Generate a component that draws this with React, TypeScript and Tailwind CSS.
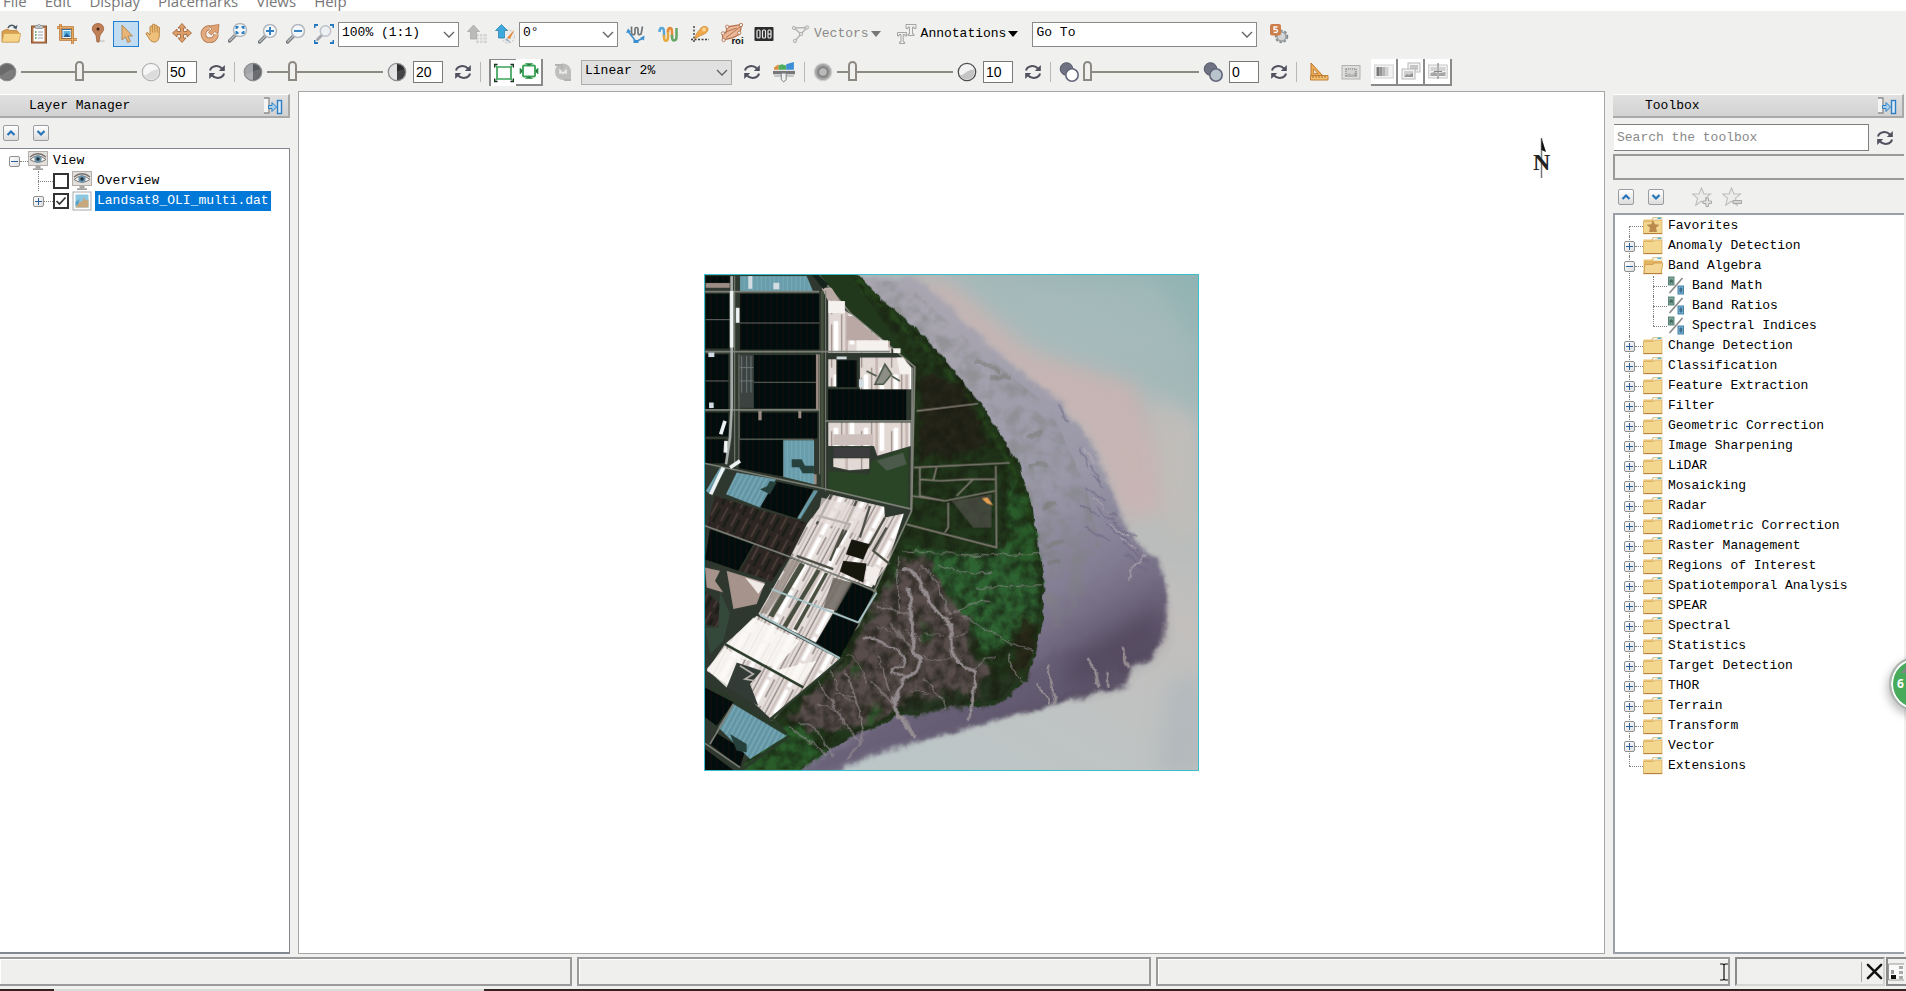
import React from "react";

type Kids = { children?: React.ReactNode };

const MONO = "font-['Liberation_Mono',monospace] text-[13px] leading-5";

/* ---------- icon helpers ---------- */

function Svg({ children, size = 20 }: Kids & { size?: number }) {
  return (
    <svg width={size} height={size} viewBox="0 0 20 20" fill="none" aria-hidden="true" className="block shrink-0">
      {children}
    </svg>
  );
}

const OpenFolder = () => (
  <Svg>
    <path d="M1 18V7.500L6 5l3 1.500h7L18 9v9z" fill="#d9a04e" stroke="#b9823a" strokeWidth=".8" />
    <path d="M1 18 3 9.500h17L17.500 18z" fill="#f6d489" stroke="#d0a050" strokeWidth=".7" />
    <path d="M7 4c2-4 6-3.500 7.500-.5" stroke="#4c5a68" strokeWidth="1.500" />
    <path d="m16.500 1-1 4.500-3.700-2z" fill="#4c5a68" />
  </Svg>
);
const Clipboard = () => (
  <Svg>
    <rect x="2.500" y="2" width="15" height="17" fill="#b5764a" stroke="#8b5632" />
    <rect x="4.500" y="4" width="11" height="13.500" fill="#fbfbfb" />
    <rect x="6" y="1.500" width="8" height="3" rx="1" fill="#c6ccd0" stroke="#7c858b" strokeWidth=".7" />
    <circle cx="10" cy="1.500" r="1.300" fill="#e8eaec" stroke="#7c858b" strokeWidth=".7" />
    <path d="M6 8h1.500M6 11h1.500M6 14h1.500" stroke="#3d9a4e" strokeWidth="1.500" />
    <path d="M9 8h5M9 11h5M9 14h5" stroke="#9aa4ab" />
  </Svg>
);
const Crop = () => (
  <Svg>
    <rect x="5" y="5.500" width="10" height="9" fill="#f5f5f5" stroke="#2c6ea5" />
    <rect x="6.500" y="7" width="7" height="6" fill="#5bb3e0" />
    <path d="m6.500 13 3-4 4 4z" fill="#225f96" />
    <path d="M3.500 0v15.500H20M0 3.500h15.500V20" stroke="#b86f2c" strokeWidth="2.600" />
    <path d="M3.500 0v15.500H20M0 3.500h15.500V20" stroke="#e4a85f" strokeWidth="1.200" />
  </Svg>
);
const Pin = () => (
  <Svg>
    <ellipse cx="12.500" cy="18" rx="4.500" ry="1.300" fill="#d2d2d0" />
    <path d="M10 .5C6.500.5 4.300 2.800 4.300 5.700c0 2.800 2.500 4.300 3.700 6.800L9 19h2l1-6.500c1.200-2.500 3.700-4 3.700-6.800C15.700 2.800 13.500.5 10 .5z" fill="#c07f55" stroke="#9a6240" strokeWidth=".8" />
    <circle cx="10" cy="6" r="1.500" fill="#3d2418" />
  </Svg>
);
const Pointer = () => (
  <Svg>
    <path d="M6 1v15l3.500-3 2.300 5.500 2.600-1.200L12 12h4.500z" fill="#e8b577" stroke="#b08a5c" strokeWidth="1" strokeLinejoin="round" />
  </Svg>
);
const Hand = () => (
  <Svg>
    <path d="M6 12V4.200a1.200 1.200 0 0 1 2.400 0V2.300a1.200 1.200 0 0 1 2.400 0v1a1.200 1.200 0 0 1 2.400 0v1.500a1.100 1.100 0 0 1 2.200.2L15.200 13c-.2 3.500-1.800 6-4.700 6-3.500 0-4.500-2-6-4.500L2.200 11c-.5-1.200 1-1.900 1.800-1z" fill="#efc07a" stroke="#b98240" strokeWidth="1" />
    <path d="M8.400 4v5.500M10.800 3.500v6M13.200 4.500v5" stroke="#b98240" strokeWidth=".9" />
  </Svg>
);
const Move = () => (
  <Svg>
    <path d="m10 .5 4 4.500h-2.500v3.500H15V6l4.500 4-4.500 4v-2.500h-3.500V15H14l-4 4.500L6 15h2.500v-3.500H5V14L.5 10 5 6v2.500h3.500V5H6z" fill="#dc9f6a" stroke="#a86a3c" strokeWidth=".9" />
  </Svg>
);
const Rotate = () => (
  <Svg>
    <path d="M9.500 4.800A6.300 6.300 0 1 0 16 11.500" stroke="#b0754c" strokeWidth="5.600" />
    <path d="M9.500 4.800A6.300 6.300 0 1 0 16 11.500" stroke="#e2ab80" strokeWidth="4" />
    <path d="M8.500 9.500 12 6 9 3l10-1.500-1 9.500-3.200-2.500-3.500 3.500z" fill="#dfa273" stroke="#b06f42" strokeWidth=".7" />
  </Svg>
);
function Lens({ mark }: { mark: string }) {
  return (
    <Svg>
      <path d="m1.500 18 6-6" stroke="#6f7478" strokeWidth="3.400" strokeLinecap="round" />
      <path d="m1.800 17.500 6-6" stroke="#b9bdc0" strokeWidth="1.600" strokeLinecap="round" />
      <circle cx="12" cy="7" r="6.500" fill="#f4f7fa" stroke="#b4b9bf" strokeWidth="1.500" />
      <path d={mark} stroke="#2f7fc0" strokeWidth="1.900" />
    </Svg>
  );
}
const FitLens = () => (
  <Svg>
    <path d="M.5 4V1H4M16 1h3.500v3M.5 16v3H4M16 19h3.500v-3" stroke="#2579bf" strokeWidth="2" />
    <path d="m3.500 15.500 4-4" stroke="#a4a8ab" strokeWidth="3" strokeLinecap="round" />
    <circle cx="11.500" cy="7" r="5.200" fill="#eef1f4" stroke="#bcc2c8" strokeWidth="1.500" />
  </Svg>
);
const ArrowBlocks = () => (
  <Svg>
    <path d="M9 10h11v9H9z" fill="#d6d6d4" />
    <path d="M9 13h11M9 16h11M12.500 10v9M16 10v9" stroke="#efefed" />
    <path d="m6.500 1 6 6.500H9.500V15h-6V7.500H.5z" fill="#bababa" stroke="#a4a4a4" strokeWidth=".7" />
  </Svg>
);
const ArrowCompass = () => (
  <Svg>
    <circle cx="13" cy="12.500" r="6.500" fill="#ececea" stroke="#b9c0c6" strokeDasharray="2 1.500" />
    <path d="m12 14 7.500-8.500L15 15z" fill="#e58a3c" />
    <path d="m12 14 4 5-6-3z" fill="#9db3c4" />
    <path d="m6.500.5 6 6H9.500V14h-6V6.500H.5z" fill="#3da9dc" stroke="#1f7dad" strokeWidth=".7" />
  </Svg>
);
const ProfileArrows = () => (
  <Svg>
    <path d="M5.500 2.500v6c0 3 3.500 3 3.500 0V5c0-2 3-2 3 0v4c0 2.500 3 2 3.300 0L16.500 2.500" stroke="#70767a" strokeWidth="1.700" />
    <path d="m2.500 8 7.500 9.500 6.500-3" stroke="#3b8fd0" strokeWidth="1.500" />
    <path d="m0 9 2-4.500 3 3.500zM18.500 11.500l-.5 5-4-2.500zM7.500 16h5v3h-5z" fill="#3b8fd0" />
  </Svg>
);
const Spectrum = () => (
  <Svg>
    <path d="M1.500 8c0-5.500 4.500-5.500 4.500 0v5" stroke="#5aa7d8" strokeWidth="2.500" />
    <path d="M6 11v2c0 5 4 5 4 0V5" stroke="#e7a93c" strokeWidth="2.500" />
    <path d="M10 8c0-5.500 4-5.500 4 0v5" stroke="#e28b3c" strokeWidth="2.500" />
    <path d="M14 11v2c0 5 4.500 4 4.500 0V4" stroke="#63a566" strokeWidth="2.500" />
  </Svg>
);
const Scatter = () => (
  <Svg>
    <path d="M4 2v16M1 15.500h18" stroke="#3e3e3e" strokeWidth="1.400" strokeDasharray="2 1.500" />
    <path d="M5 15c0-5 4-8 6-11 2-2.500 7-2 7 1s-3 5-6 6-4 2-7 4z" fill="#efa94a" stroke="#c98429" strokeWidth=".7" />
    <circle cx="14" cy="5.500" r="2" fill="#f8d693" />
  </Svg>
);
const Roi = () => (
  <Svg size={24}>
    <path d="m6 4 12-2-1.500 8L11 13l-8.500 2L2 10l3-1z" fill="#eab898" stroke="#b4704c" strokeWidth="1" />
    <path d="m3 9 11-4M5 13l12-9" stroke="#b4704c" strokeWidth=".8" />
    <g fill="#f3efec" stroke="#b4704c" strokeWidth=".7">
      <circle cx="6" cy="4" r="1.400" /><circle cx="17.500" cy="2.500" r="1.400" /><circle cx="2.500" cy="9.500" r="1.400" /><circle cx="3" cy="15" r="1.400" /><circle cx="16" cy="9" r="1.400" />
    </g>
    <text x="9.500" y="18.500" fontFamily="Liberation Sans" fontWeight="700" fontSize="8" fill="#111">roi</text>
  </Svg>
);
const Counter = () => (
  <Svg>
    <rect x=".5" y="3" width="19" height="14" rx="1" fill="#2c2c2c" />
    <g stroke="#e8e8e8" strokeWidth="1.200">
      <rect x="3" y="6" width="3" height="8" rx="1" /><rect x="8.500" y="6" width="3" height="8" rx="1" /><rect x="14" y="6" width="3" height="8" rx="1" /><path d="M14 10h3" />
    </g>
  </Svg>
);
const VectorIcon = () => (
  <Svg>
    <path d="m4 4 13-.5L11 10l-6 7M4 4l7 6" stroke="#b4b4b2" strokeWidth="1.500" />
    <g fill="#dededc" stroke="#a8a8a6" strokeWidth=".8">
      <circle cx="4" cy="4" r="1.700" /><circle cx="17" cy="3.500" r="1.700" /><circle cx="11" cy="10" r="1.700" /><circle cx="5" cy="17" r="1.700" />
    </g>
  </Svg>
);
const TextIcon = () => (
  <Svg>
    <path d="M9 .5h10v4h-2V3h-1.500v7H17v1.500h-6V10h1.500V3H11v1.500H9z" fill="#f2f2f0" stroke="#9c9c9a" strokeWidth=".9" />
    <path d="M.5 8.500h9v3.500H8v-1.500H6.200V18h1.500v1.500H2.500V18H4v-7.500H2V12H.5z" fill="#f2f2f0" stroke="#9c9c9a" strokeWidth=".9" />
  </Svg>
);
const Extensions5 = () => (
  <Svg>
    <circle cx="12.500" cy="12.500" r="5.500" fill="#d2d4d5" stroke="#878c90" strokeWidth="2.500" strokeDasharray="2.400 1.600" />
    <circle cx="12.500" cy="12.500" r="4.500" stroke="#9da2a5" strokeWidth="1.400" />
    <rect x="1" y="0" width="11" height="11.500" rx="2" fill="#cd7f4b" />
    <path d="M8.500 3H5v2.500c3-.6 3.700.5 3.500 1.700C8.300 8.600 6.500 8.800 4.700 8" stroke="#fff" strokeWidth="1.300" />
  </Svg>
);
const Refresh = () => (
  <Svg>
    <path d="M3 8.500c1-4.700 8-6 12-2" stroke="#50505f" strokeWidth="2" />
    <path d="M17.800 3v6h-6z" fill="#50505f" />
    <path d="M17 11.500c-1 4.700-8 6-12 2" stroke="#50505f" strokeWidth="2" />
    <path d="M2.200 17v-6h6z" fill="#50505f" />
  </Svg>
);
function Ball({ kind }: { kind: "dark" | "light" | "contrastLow" | "contrastHigh" | "blur" | "sharp" }) {
  if (kind === "blur")
    return (
      <Svg>
        <circle cx="10" cy="10" r="9.300" fill="#cfcfcd" />
        <circle cx="10" cy="10" r="8" fill="#a5a5a5" />
        <circle cx="10" cy="10" r="6" fill="#858585" />
        <circle cx="10" cy="10" r="3.800" fill="#b9b9b9" />
      </Svg>
    );
  const fills = {
    dark: ["#6a6a6a", "#7d7d7d", "#8d8d8d"],
    light: ["#f6f6f6", "#dcdcdc", "#b4b4b4"],
    contrastLow: ["#a3a5a8", "#55585c", "#8a8c8e"],
    contrastHigh: ["#e2e2e2", "#2b2b2d", "#8a8c8e"],
    sharp: ["#f2f2f2", "#c3c4c3", "#4a4d4c"],
  }[kind];
  const half = kind.startsWith("contrast");
  return (
    <Svg>
      <circle cx="10" cy="10" r="8.700" fill={fills[0]} stroke={fills[2]} strokeWidth="1.300" />
      {half ? (
        <path d="M10 2a8 8 0 0 1 0 16z" fill={fills[1]} />
      ) : (
        <path d="M2.500 13c5 1 7-6 15-5.500.8 6-3 10-7.500 10-4 0-6-2-7.500-4.500z" fill={fills[1]} />
      )}
      {half && <path d="M2.500 12c5 1 8-5 15-4.500 0 6-3 10-7.500 10-4 0-6-2-7.500-5.500z" fill="#fff" opacity=".13" />}
    </Svg>
  );
}
function Overlap({ front }: { front: string }) {
  return (
    <Svg>
      <circle cx="7.500" cy="7" r="6.300" fill="#6e7282" stroke="#565a6a" />
      <circle cx="13" cy="13" r="6.200" fill={front} stroke="#62667a" strokeWidth="1.600" />
    </Svg>
  );
}
const Extent = () => (
  <Svg>
    <rect x="3" y="4" width="14" height="12" rx="1" stroke="#3ba458" strokeWidth="1.700" />
    <path d="M.5 4.500v-3h3M16.500 1.500h3v3M.5 15.500v3h3M16.500 18.500h3v-3" stroke="#222" strokeWidth="1.600" />
    <path d="m1 2 3 3M19 2l-3 3M1 18l3-3M19 18l-3-3" stroke="#3ba458" strokeWidth="1.200" />
  </Svg>
);
const ExtentIn = () => (
  <Svg>
    <rect x="4" y="4.500" width="12" height="11" rx="1" stroke="#3ba458" strokeWidth="1.900" />
    <path d="M6.500 2.500h7L10 5zM6.500 17.500h7L10 15zM1 7v6l3-3zM19 7v6l-3-3z" fill="#2d6e3e" stroke="#3ba458" strokeWidth=".8" />
  </Svg>
);
const DisabledRefresh = () => (
  <Svg>
    <path d="M2 10a8 8 0 0 1 16-1v9h-9a8 8 0 0 1-7-8z" fill="#bebebc" />
    <path d="M2 3h7v4M18 18h-7" stroke="#b2b2b0" strokeWidth="2" />
    <path d="M7 12V8.500l3 3 3-3V12" stroke="#e9e9e7" strokeWidth="1.600" />
  </Svg>
);
const HistogramIcon = () => (
  <Svg size={22}>
    <path d="M1 8V6l4-3v5z" fill="#e28a3c" />
    <path d="M5 8V4l3-1 4 1v4z" fill="#4fae5e" />
    <path d="M12 8V3l3-1 4-1v7z" fill="#3c8fd6" />
    <path d="M0 9h20v3H0z" fill="#75777a" />
    <path d="M1 12.500h18v2H1z" fill="#c3c4c5" />
    <path d="M7.500 11h4.500v6l-2.200 2-2.300-2z" fill="#f0f0f0" stroke="#7e8082" strokeWidth=".9" />
  </Svg>
);
const SetSquare = () => (
  <Svg>
    <path d="M2 1v12.500L14 14z" fill="#f2ac55" stroke="#b9762d" />
    <path d="M4.500 7v4.500H9z" fill="#f0f0ee" stroke="#b9762d" strokeWidth=".8" />
    <path d="M1.500 13.500h17.500V18H1.500z" fill="#f6c071" stroke="#b9762d" strokeWidth=".9" />
    <path d="M4 14v2M7 14v2M10 14v2M13 14v2M16 14v2" stroke="#8e5a20" strokeWidth=".8" />
  </Svg>
);
const ImageChip = () => (
  <Svg>
    <rect x="1" y="3.500" width="18" height="13.500" fill="#dedede" stroke="#b2b2b0" />
    <path d="M3.500 6h13v9h-13z" fill="#d3d3d1" />
    <path d="m4 14 4-3 3 2 5-4v6H4z" fill="#b4b4b2" />
    <path d="M5 7h10" stroke="#777" strokeDasharray="1 1" />
    <path d="M5 7v7M15 7v7" stroke="#777" strokeDasharray="1 1" />
  </Svg>
);
const BlendIcon = () => (
  <Svg>
    <rect x=".7" y="4" width="18.500" height="13" fill="#f3f3f3" stroke="#cfcfcf" />
    <path d="M2.500 6h3v9h-3z" fill="#777" /><path d="M5.500 6h3v9h-3z" fill="#959595" /><path d="M8.500 6h3v9h-3z" fill="#b3b3b3" /><path d="M11.500 6h3v9h-3z" fill="#d1d1d1" />
  </Svg>
);
const FlickerIcon = () => (
  <Svg>
    <rect x="7" y="2" width="12" height="9" fill="#f3f3f3" stroke="#b9b9b9" />
    <rect x="9" y="4" width="8" height="5" fill="#c6c6c6" />
    <rect x="1" y="8" width="13" height="10" fill="#f3f3f3" stroke="#b9b9b9" />
    <path d="M3 10h9v6H3z" fill="#cfcfcf" /><path d="m3 16 3-3 2 1 4-2v4z" fill="#959595" />
  </Svg>
);
const SwipeIcon = () => (
  <Svg>
    <rect x=".7" y="4" width="18.500" height="13" fill="#f3f3f3" stroke="#c6c6c6" />
    <path d="M2.500 6h6.500v4H2.500zM11 6h6.500v4H11z" fill="#d3d3d3" />
    <path d="M2.500 12l4-1 2.500 1v3H2.500zM11 12l6.500-1v4H11z" fill="#a6a6a6" />
    <path d="M10 2v16" stroke="#777" /><path d="M6 10.500h8" stroke="#888" />
  </Svg>
);
const Dock = () => (
  <Svg>
    <path d="M1 2h5v15H1" fill="#f4f4f4" />
    <path d="M1 2h5v15H1" stroke="#8c8c8c" strokeWidth="1.300" />
    <rect x="14.500" y="4.500" width="4" height="13" fill="#dceaf6" stroke="#2d7fc4" strokeWidth="1.400" />
    <path d="M5.500 9.500H9V6.500l4.500 4.500L9 15.500v-3H5.500z" fill="#a8d0ef" stroke="#2d7fc4" strokeWidth="1" />
  </Svg>
);
const EyeMonitor = () => (
  <Svg>
    <rect x=".5" y=".5" width="19" height="14" fill="#e2e0dd" stroke="#b3aeaa" />
    <path d="M7.500 15h5v2.500h-5z" fill="#a9a5a1" /><path d="M5 17.500h10v1.300H5z" fill="#8a8682" />
    <path d="M2 8.500Q10 1.500 18 8.500 10 14 2 8.500z" fill="#fafafa" stroke="#6c6662" strokeWidth=".9" />
    <circle cx="10" cy="8" r="3.700" fill="#6d93a9" /><circle cx="10" cy="8" r="1.700" fill="#1f3440" />
    <path d="M2 6Q10-.5 18 6" stroke="#77706b" strokeWidth="1.400" />
  </Svg>
);
const RasterIcon = () => (
  <Svg>
    <rect x="1" y="1" width="18" height="18" fill="#fdfdfd" stroke="#a6a9ac" />
    <rect x="3.500" y="3.500" width="13" height="13" fill="#8cc7e2" />
    <path d="m3.500 16.500 3.500-5 3-1 2-4 2 3 2.500-1v8z" fill="#c7a77c" /><path d="m3.500 11 4-3-1 5-3 2z" fill="#5d9fc0" />
  </Svg>
);
function Folder({ kind }: { kind: "closed" | "open" | "star" }) {
  return (
    <Svg>
      <path d="M.5 17.500V3.500h8l1.500-2.500h9v16.500z" fill="#e9c374" />
      <path d="M10 1.500h9V5H10z" fill="#f6f3e8" stroke="#d9bd84" strokeWidth=".6" />
      <path d="M14.500 1.500h3.500v1.500h-3.500z" fill="#4fb4d8" />
      {kind === "open" ? (
        <>
          <path d="M1 17.500V5h18v4" fill="#e3b45f" />
          <path d="m1 17.500 1-9h8l1-1.500h9L18 17.500z" fill="#f5d795" stroke="#cd9748" strokeWidth=".8" />
        </>
      ) : (
        <path d="M.5 17.500V5.500h10L12 4h7v13.500z" fill="#f3d78f" stroke="#d9a95c" strokeWidth=".7" />
      )}
      <path d="M.5 17.600h18.800" stroke="#b87d3c" strokeWidth="1.100" />
      {kind === "star" && <path d="m10 4 1.800 4.200 4.700.5-3.500 3 1 4.300H6l1-4.300-3.500-3 4.700-.5z" fill="#b98a4c" />}
    </Svg>
  );
}
const AlgebraIcon = () => (
  <Svg>
    <rect x="1.500" y="1" width="5.500" height="8" fill="#7fa89b" stroke="#4f7c70" strokeWidth=".9" />
    <path d="M3.200 7.500V4h2v3.500M3.200 5.500h2" stroke="#2f4f48" strokeWidth=".8" />
    <path d="M15.500 2 2.500 17" stroke="#8a8a88" strokeWidth="1.700" />
    <rect x="11" y="10" width="5.500" height="8" fill="#7db6d9" stroke="#38759e" strokeWidth=".9" />
    <path d="M13 12v4h1.700v-4zM13 14h2" stroke="#23506e" strokeWidth=".8" />
  </Svg>
);
function Star({ minus = false }: { minus?: boolean }) {
  return (
    <Svg>
      <path d="m9.500 1 2.400 6h6.600l-5 4.200 1.700 7-5.700-4-5.700 4 1.700-7-5-4.200h6.600z" fill="#ececea" stroke="#bdbdbb" strokeWidth="1.100" />
      {minus ? (
        <path d="M11 13.500h8.500v3H11z" fill="#d5d5d3" stroke="#a2a2a0" strokeWidth=".9" />
      ) : (
        <path d="M14 11h2.500v3h3v2.500h-3v3H14v-3h-3V14h3z" fill="#e5e5e3" stroke="#a2a2a0" strokeWidth=".9" />
      )}
    </Svg>
  );
}

/* ---------- controls ---------- */

function Tool({ label, children, wide = false }: Kids & { label: string; wide?: boolean }) {
  return (
    <button type="button" aria-label={label} className={`flex h-6 shrink-0 items-center justify-center ${wide ? "w-8" : "w-7"}`}>
      {children}
    </button>
  );
}

function Combo({ label, value, className, filled = false }: { label: string; value: string; className: string; filled?: boolean }) {
  return (
    <div className={`relative shrink-0 ${className}`}>
      <select
        aria-label={label}
        className={`block h-[25px] w-full appearance-none border pb-0.5 pl-[3px] pr-6 text-black ${filled ? "border-[#adadad] bg-[#e1e1e1]" : "border-[#8a8a8a] bg-white"} ${MONO}`}
      >
        <option>{value}</option>
      </select>
      <svg viewBox="0 0 12 8" className="pointer-events-none absolute right-1 top-[9px] h-2 w-3" fill="none" aria-hidden="true">
        <path d="m1 1 5 5 5-5" stroke="#606060" strokeWidth="1.300" />
      </svg>
    </div>
  );
}

function SliderGroup({ name, value, max, left, right }: { name: string; value: number; max: number; left: React.ReactNode; right: React.ReactNode }) {
  return (
    <div className="flex shrink-0 items-center">
      <span className="flex w-6 items-center">{left}</span>
      <input
        type="range"
        aria-label={name}
        defaultValue={value}
        max={max}
        className="h-6 w-[116px] appearance-none bg-transparent [&::-webkit-slider-runnable-track]:h-[2px] [&::-webkit-slider-runnable-track]:bg-[#8d8983] [&::-webkit-slider-thumb]:-mt-[10px] [&::-webkit-slider-thumb]:h-5 [&::-webkit-slider-thumb]:w-[9px] [&::-webkit-slider-thumb]:appearance-none [&::-webkit-slider-thumb]:rounded-t-full [&::-webkit-slider-thumb]:border-[2px] [&::-webkit-slider-thumb]:border-[#8d8983] [&::-webkit-slider-thumb]:bg-[#f0f0ee]"
      />
      <span className="ml-1 flex w-[26px] items-center">{right}</span>
      <input
        aria-label={`${name} value`}
        defaultValue={value}
        className="h-[22px] w-[30px] border border-[#7a7a7a] bg-white px-0.5 font-['Liberation_Sans',sans-serif] text-sm text-black"
      />
      <span className="ml-1">
        <Tool label={`Reset ${name}`} wide><Refresh /></Tool>
      </span>
    </div>
  );
}

const Divider = () => <span className="h-5 w-px shrink-0 bg-[#b8b8b6]" />;

function PanelHeader({ title, className }: { title: string; className: string }) {
  return (
    <header className="flex h-6 shrink-0 items-center justify-between border-b-2 border-r-2 border-t border-b-[#a9a9a9] border-r-[#a9a9a9] border-t-white bg-linear-to-b from-[#e0e0e0] to-[#d2d2d2] pr-[5px]">
      <h2 className={`text-black ${className} ${MONO}`}>{title}</h2>
      <button type="button" aria-label={`Hide ${title}`}><Dock /></button>
    </header>
  );
}

function CollapseButton({ down = false }: { down?: boolean }) {
  return (
    <button
      type="button"
      aria-label={down ? "Expand all" : "Collapse all"}
      className="flex size-4 items-center justify-center rounded-xs border border-[#9a9da0] bg-linear-to-b from-white to-[#dcdcdc]"
    >
      <svg viewBox="0 0 10 8" className="h-2 w-2.5" fill="none" aria-hidden="true">
        <path d={down ? "m1.500 2 3.500 3.500L8.500 2" : "M1.500 6 5 2.500 8.500 6"} stroke="#2674b8" strokeWidth="2.200" />
      </svg>
    </button>
  );
}

function Expander({ open = false }: { open?: boolean }) {
  return (
    <button
      type="button"
      aria-label={open ? "Collapse" : "Expand"}
      className="relative z-10 flex size-[11px] shrink-0 items-center justify-center rounded-[2px] border border-[#8e8f8f] bg-linear-to-br from-white to-[#dedede]"
    >
      <svg viewBox="0 0 7 7" className="size-[7px]" aria-hidden="true">
        <path d={open ? "M0 3h7v1H0z" : "M0 3h3V0h1v3h3v1H4v3H3V4H0z"} fill="#2a5f9e" />
      </svg>
    </button>
  );
}

const Dots = ({ className }: { className: string }) => <span className={`h-px shrink-0 border-t border-dotted border-[#808080] ${className}`} />;

/* ---------- toolbox tree ---------- */

type Node = { name: string; kind?: "leaf" | "star"; children?: string[] };

const TOOLBOX: Node[] = [
  { name: "Favorites", kind: "star" },
  { name: "Anomaly Detection" },
  { name: "Band Algebra", children: ["Band Math", "Band Ratios", "Spectral Indices"] },
  { name: "Change Detection" },
  { name: "Classification" },
  { name: "Feature Extraction" },
  { name: "Filter" },
  { name: "Geometric Correction" },
  { name: "Image Sharpening" },
  { name: "LiDAR" },
  { name: "Mosaicking" },
  { name: "Radar" },
  { name: "Radiometric Correction" },
  { name: "Raster Management" },
  { name: "Regions of Interest" },
  { name: "Spatiotemporal Analysis" },
  { name: "SPEAR" },
  { name: "Spectral" },
  { name: "Statistics" },
  { name: "Target Detection" },
  { name: "THOR" },
  { name: "Terrain" },
  { name: "Transform" },
  { name: "Vector" },
  { name: "Extensions", kind: "leaf" },
];

function ToolboxTree() {
  return (
    <ul className={`pl-[9px] pt-px text-black ${MONO}`}>
      {TOOLBOX.map((node, i) => {
        const first = i === 0;
        const last = i === TOOLBOX.length - 1;
        return (
          <li key={node.name} className="relative">
            <span
              className={`absolute left-[5px] w-px border-l border-dotted border-[#808080] ${first ? "bottom-0 top-[10px]" : last ? "top-0 h-[10px]" : "inset-y-0"}`}
            />
            <div className="flex h-5 items-center">
              {node.kind ? <Dots className="ml-[5px] w-[14px]" /> : (<><Expander open={!!node.children} /><Dots className="w-2" /></>)}
              <Folder kind={node.kind === "star" ? "star" : node.children ? "open" : "closed"} />
              <span className="pl-[5px]">{node.name}</span>
            </div>
            {node.children && (
              <ul className="pl-[29px]">
                {node.children.map((child, j) => (
                  <li key={child} className="relative flex h-5 items-center">
                    <span className={`absolute left-0 top-0 w-px border-l border-dotted border-[#808080] ${j === 2 ? "h-[10px]" : "h-5"}`} />
                    <Dots className="w-[14px]" />
                    <AlgebraIcon />
                    <span className="pl-[5px]">{child}</span>
                  </li>
                ))}
              </ul>
            )}
          </li>
        );
      })}
    </ul>
  );
}

/* ---------- satellite scene ---------- */

const CREEKS: [string, number][] = [
  ["M640 925C700 930 690 980 715 1020 740 1060 775 1070 785 1110 780 1150 785 1190 810 1205L855 1235C855 1290 845 1330 840 1380", 10],
  ["M660 985C655 1040 670 1070 670 1130 670 1150 660 1165 690 1195 700 1230 655 1245 640 1265 610 1310 605 1340 620 1355L672 1425", 12],
  ["M525 1130C560 1140 620 1150 640 1190 645 1220 610 1215 605 1235L650 1245", 7],
  ["M560 1040C600 1055 640 1050 665 1065M605 1085C630 1120 640 1150 665 1165", 6],
  ["M465 1235C490 1270 490 1310 510 1350L518 1430 475 1495", 6],
  ["M380 1260C430 1320 450 1380 505 1440", 6],
  ["M540 1260C570 1280 590 1310 610 1330M300 1400C340 1440 390 1450 405 1480M330 1390C400 1390 380 1430 430 1490", 5],
  ["M785 1060C810 1040 850 1020 900 1025M820 1060C870 1100 920 1120 960 1145L1030 1170M740 910C780 930 830 940 905 935", 4],
  ["M640 870C720 880 800 880 900 885L1050 875M860 980 1055 975M850 1225C880 1200 900 1190 920 1185M955 1180C960 1220 980 1240 1000 1265", 4],
  ["M1075 1215C1080 1260 1095 1300 1100 1325M1195 1195C1220 1230 1220 1250 1228 1275M1300 1160C1305 1190 1300 1215 1315 1215M1250 1235 1256 1275M1045 1275 1080 1325", 8],
  ["M630 890C600 930 640 1010 625 1060M690 920C760 950 740 990 780 1060M710 1000C730 1060 745 1070 780 1075M560 1180C590 1200 560 1230 600 1290M700 1250C720 1270 740 1300 770 1340", 4],
  ["M470 1180C500 1200 520 1220 530 1270M420 1220 450 1300 500 1330M580 1020 610 1050M700 1110 760 1130M700 1190 740 1200 800 1190M790 1130 830 1120M640 1110 690 1140M560 1100 610 1120M430 1300 500 1310M380 1330 450 1350M660 1290 720 1300", 3],
];

function Scene() {
  return (
    <svg viewBox="45 42 1480 1486" preserveAspectRatio="none" className="block h-full w-full" role="img" aria-label="Landsat8_OLI_multi.dat">
      <defs>
        <linearGradient id="sea" x1="1" y1="0" x2=".45" y2="1">
          <stop offset="0" stopColor="#91b3b3" /><stop offset=".3" stopColor="#b0bcbc" /><stop offset=".55" stopColor="#c2bfbd" /><stop offset="1" stopColor="#bcc6c7" />
        </linearGradient>
        <linearGradient id="mud" gradientUnits="userSpaceOnUse" x1="760" y1="200" x2="1330" y2="1200">
          <stop offset="0" stopColor="#a8a5b0" /><stop offset=".5" stopColor="#9a98a8" /><stop offset=".75" stopColor="#827c92" /><stop offset="1" stopColor="#584f64" />
        </linearGradient>
        <pattern id="pond" width="18" height="40" patternUnits="userSpaceOnUse"><rect width="18" height="40" fill="#050808" /><path d="M9 0v40" stroke="#151b18" strokeWidth="2" /></pattern>
        <pattern id="blue" width="13" height="30" patternUnits="userSpaceOnUse"><rect width="13" height="30" fill="#699dab" /><path d="M6 0v30" stroke="#79adba" strokeWidth="3" /></pattern>
        <pattern id="blueTilt" width="14" height="30" patternUnits="userSpaceOnUse" patternTransform="rotate(28)"><rect width="14" height="30" fill="#6495a4" /><path d="M6 0v30" stroke="#7aaebb" strokeWidth="4" /></pattern>
        <pattern id="salt" width="64" height="90" patternUnits="userSpaceOnUse" patternTransform="rotate(28)"><rect width="64" height="90" fill="#e6dedb" /><path d="M4 0v90M46 0v60" stroke="#8b807d" strokeWidth="4" /><path d="M16 0v90" stroke="#c9bcb8" strokeWidth="6" /><path d="M30 10v80" stroke="#fff" strokeWidth="12" /><path d="M56 0v90" stroke="#b9afab" strokeWidth="3" /></pattern>
        <pattern id="pan" width="90" height="160" patternUnits="userSpaceOnUse"><rect width="90" height="160" fill="#e2d8d4" /><path d="M5 0v110M65 30v130" stroke="#9d908b" strokeWidth="4" /><path d="M20 0v160" stroke="#c6b7b2" strokeWidth="8" /><path d="M36 0v90M78 20v90" stroke="#fff" strokeWidth="14" /></pattern>
        <pattern id="brown" width="34" height="60" patternUnits="userSpaceOnUse" patternTransform="rotate(28)"><rect width="34" height="60" fill="#2f2722" /><path d="M6 0v45" stroke="#4a3f38" strokeWidth="5" /><path d="M20 15v45" stroke="#1a1f18" strokeWidth="8" /></pattern>
        <filter id="rough" x="-5%" y="-5%" width="110%" height="110%"><feTurbulence type="fractalNoise" baseFrequency=".03" numOctaves="3" seed="4" /><feDisplacementMap in="SourceGraphic" scale="24" xChannelSelector="R" yChannelSelector="G" /></filter>
        <filter id="blend" x="-5%" y="-5%" width="110%" height="110%"><feGaussianBlur stdDeviation="7" result="b" /><feTurbulence type="fractalNoise" baseFrequency=".02" numOctaves="4" seed="8" /><feDisplacementMap in="b" scale="60" xChannelSelector="R" yChannelSelector="G" /></filter>
        <filter id="soft" x="-20%" y="-20%" width="140%" height="140%"><feGaussianBlur stdDeviation="28" /></filter>
        <filter id="pixel"><feGaussianBlur stdDeviation="1.500" /></filter>
        <filter id="edge"><feGaussianBlur stdDeviation="6" result="b" /><feTurbulence type="fractalNoise" baseFrequency=".025" numOctaves="3" seed="6" /><feDisplacementMap in="b" scale="26" xChannelSelector="R" yChannelSelector="G" /></filter>
        <filter id="grainLand" x="0" y="0" width="100%" height="100%" colorInterpolationFilters="sRGB"><feTurbulence type="fractalNoise" baseFrequency=".03" numOctaves="5" seed="9" /><feColorMatrix values="0 0 0 0 .09  0 0 0 0 .1  0 0 0 0 .06  2.500 0 0 0 -.9" /><feComposite in2="SourceGraphic" operator="in" /></filter>
        <filter id="grainMud" x="0" y="0" width="100%" height="100%" colorInterpolationFilters="sRGB"><feTurbulence type="fractalNoise" baseFrequency=".022" numOctaves="5" seed="3" /><feColorMatrix values="0 0 0 0 .5  0 0 0 0 .51  0 0 0 0 .5  0 2.600 0 0 -1" /><feComposite in2="SourceGraphic" operator="in" /></filter>
      </defs>

      <rect x="43" y="40" width="1484" height="1492" fill="url(#sea)" />
      <g filter="url(#soft)">
        <path d="M620 20 780 60 1020 270 1340 370 1400 560 1420 760 1300 780 1180 520 900 280z" fill="#c9b4b3" opacity=".9" />
        <path d="M1380 400 1530 480 1530 820 1440 850z" fill="#c0bdba" />
        <path d="M1440 1260 1540 1240 1540 1540 1400 1540z" fill="#b3b9bc" />
        <path d="M930 80 1400 60 1530 320 1150 270z" fill="#a6bbbc" opacity=".6" />
      </g>

      <path filter="url(#edge)" d="M490 50H680L760 120 890 245 1010 345 1110 420 1200 540 1260 670 1310 800 1355 860 1410 900 1432 1010 1425 1120 1380 1200 1322 1222 1313 1275 1100 1330 860 1395 690 1440 485 1508 420 1550H290L510 1300 900 900z" fill="url(#mud)" />
      <path d="M1306 1260 1090 1318 850 1380 680 1425 475 1494 420 1526H350L600 1370 930 1330 1050 1200 1250 1160z" fill="#635b72" opacity=".6" filter="url(#edge)" />
      <path d="M1130 1200 1250 1130 1400 1040 1400 1130 1360 1180 1300 1200 1290 1240 1140 1280z" fill="#534a5f" opacity=".8" filter="url(#soft)" />
      <path filter="url(#grainMud)" d="M520 60H640L860 260 1080 440 1190 680 1240 900 1120 1100 1060 1100 1020 740 860 430z" fill="#fff" opacity=".5" />
      <g filter="url(#rough)" fill="none">
        <path d="M1110 430 1135 490M1170 560 1195 620M1205 610 1235 680M1240 680 1205 640M1280 770 1220 710M1295 800 1220 740M1320 840 1250 790M1350 870 1280 810M1375 905 1300 850M1370 930 1310 880M1340 830 1280 800M1250 720 1190 680M1230 770 1170 730M1260 840 1190 800" stroke="#6d6682" strokeWidth="5" opacity=".6" />
        <path d="M1265 755 1215 710M1315 825 1260 790M1370 880 1330 920 1310 960M1215 610 1185 565M1340 860 1290 830" stroke="#b9b1b7" strokeWidth="4" opacity=".7" />
        <path d="M860 300 930 330M900 350 960 345M1010 530 1060 515M1020 620 1070 605M1060 740 1100 725M1070 860 1120 840M1070 910 1110 900" stroke="#74776c" strokeWidth="14" opacity=".45" />
      </g>

      <g filter="url(#rough)">
        <path d="M30 20H482L575 115 650 175 735 260 815 355 870 425 930 515 985 610 1025 720 1045 850 1062 960 1056 1080 1040 1170 1008 1260 940 1322 860 1345 800 1325 700 1362 620 1365 570 1395 510 1415 400 1475 310 1545H30z" fill="#23371c" />
        <path d="M500 60 570 130 720 270 850 430 960 600 1010 740 1035 900" fill="none" stroke="#2b4a21" strokeWidth="16" opacity=".7" />
      </g>
      <g filter="url(#blend)">
        <path d="M700 860 900 890 980 820 1040 860 1050 960 1040 1060 1000 1120 880 1180 820 1070 740 960 650 850z" fill="#2f6330" />
        <path d="M960 640 1000 720 1040 860 1010 960 960 860 950 740z" fill="#2b5c2a" />
        <path d="M690 340 800 360 850 430 900 560 690 600z" fill="#261f19" opacity=".8" />
        <path d="M980 1060 1040 1080 1020 1230 960 1250 990 1150z" fill="#2a2419" opacity=".8" />
        <path d="M630 900 720 890 760 1000 825 1060 855 1190 900 1230 850 1310 790 1330 640 1350 560 1385 430 1410 340 1400 300 1360 460 1210 560 1020z" fill="#584d4c" />
        <path d="M640 1310 820 1290 830 1330 700 1362 630 1360zM870 1250 1000 1240 940 1320 860 1335z" fill="#263620" />
        <path d="M250 1400 330 1400 400 1470 310 1545H150z" fill="#2c5d2a" />
      </g>
      <path d="M540 1345 570 1335 560 1390 520 1400zM690 1090 730 1120 710 1160zM480 1200 510 1210 490 1260zM600 930 640 930 600 980z" fill="#2e5529" filter="url(#blend)" />
      <path filter="url(#grainLand)" d="M480 40 735 260 870 425 985 610 1045 850 1060 960 1036 1170 936 1316 620 1360 310 1526H150L250 1370 665 750 675 320z" fill="#fff" opacity=".6" />

      <g fill="none" stroke="#978f92" strokeLinecap="round" strokeLinejoin="round" filter="url(#rough)">
        {CREEKS.map(([d, w]) => (
          <path key={d} d={d} strokeWidth={w} opacity={w > 6 ? 0.95 : 0.6} />
        ))}
      </g>
      <g filter="url(#pixel)">
        <path d="M672 620 960 606M690 620V705L765 720 915 690M918 615 920 860 650 790M775 725V800L765 815M690 655 750 660 840 655 915 655M740 620 730 660M850 655 800 705M665 705 765 720M680 450 865 428" fill="none" stroke="#837c74" strokeWidth="5" />
        <path d="M785 720 905 700 905 800 850 800z" fill="#655e5d" opacity=".5" />
        <path d="m880 714 12-2 13 18-13-4z" fill="#e8a256" stroke="#e8a256" strokeWidth="4" />
      </g>

      <g filter="url(#pixel)">
        <path d="M43 40H385L480 155 675 318 665 750 505 1095 245 1380 150 1530H43z" fill="#2f382d" />
        <path d="M385 40 480 155 675 318 665 750 505 1095 245 1380" fill="none" stroke="#7f8378" strokeWidth="5" />
        <g fill="url(#pond)">
          <path d="M47 45h72v20H47zM47 98h70v165H47zM150 98h238v168H150zM47 280h68v165H47zM192 282h186v160H192zM150 455h232v78H150zM47 455h68v72H47zM47 535h60v72H47zM147 535h132v112L147 622zM415 385h234v92H415zM442 298h58v80h-58z" />
          <path d="M258 662 370 686 320 772 210 738zM60 805 190 850 145 930 45 895zM490 965 552 995 505 1085 438 1052zM430 1060 505 1090 450 1190 378 1145zM45 1280 130 1325 80 1395 45 1370zM75 1415 165 1470 150 1520 60 1450zM45 1465 130 1528H45z" />
        </g>
        <path d="M75 705 205 745 350 785 300 885 50 798zM195 852 295 890 245 962 150 930zM45 990 90 1030 85 1100 45 1090z" fill="url(#brown)" />
        <path d="M90 990 120 1060 100 1140 60 1180 45 1100 85 1100z" fill="#36483a" />
        <path d="M150 45H350L370 92H150zM280 538h92v132l-92-22z" fill="url(#blue)" />
        <path d="M140 635 258 655 210 740 108 700zM372 688 384 690 332 774 322 772zM90 620 108 622 60 700 48 690zM130 1330 290 1425 180 1495 85 1400z" fill="url(#blueTilt)" />
        <path d="M305 595h30l10 20h27v22h-34l-10-18h-23zM240 660l20 5-20 35-30-15 20-8zM120 1420l50 30v25l-30-5z" fill="#26403a" />
        <path d="M150 280h40v160h-40z" fill="#3a4240" /><path d="M155 285v110M170 285v110M183 285v110M150 320h40M150 360h40" stroke="#6d7a7a" strokeWidth="3" />
        <path d="M395 80 425 80 460 145 490 165 605 262V276H415V120zM510 290H640L665 320V385H510zM415 295h24v82h-24zM415 485h247v70l-100 30-10-30H415zM430 592h108v32l-60 4-48-10z" fill="url(#pan)" />
        <path d="M470 165 490 165 600 262 600 240 470 238zM395 82 425 82 450 120 415 118z" fill="#b9a8a3" />
        <path d="M500 238h95v36H500zM415 120h50v36h-50zM610 262h22v14h-22zM620 290h20l20 30v20h-30z" fill="#f5f1ee" />
        <path d="M430 520h120v32H430z" fill="#cdbfbb" />
        <path d="M430 560h110v30H430z" fill="#3d3c40" /><path d="M545 600 655 560V740L415 690V630L540 640z" fill="#2c4427" /><path d="M560 600 640 575 650 610 590 630z" fill="#4b5a4c" />
        <path d="M555 370 585 310 605 340 580 370zM530 330 560 345M605 345 630 360" fill="#8d8f86" stroke="#4d5a49" strokeWidth="5" />
        <path d="M420 700 583 738 585 770 642 758 592 912 545 980 300 890 352 788z" fill="url(#salt)" />
        <path d="M385 765 480 790 440 860M425 700 380 790M500 720 450 830 420 900M540 735 510 830M585 770 540 850 500 880M590 800 550 870 600 910M320 885 430 925" fill="none" stroke="#4c4d42" strokeWidth="7" />
        <path d="M485 835 540 850 520 896 468 880zM460 900 530 908 520 965 450 932z" fill="#14140f" />
        <path d="M395 710 530 745 505 820 380 780z" fill="#e6dcd8" opacity=".7" /><path d="M530 915 572 925 555 975 525 955z" fill="#f2edea" />
        <path d="M300 892 485 960 378 1145 205 1060z" fill="url(#salt)" />
        <path d="M330 905 345 912 250 1070 235 1064zM380 925 392 930 290 1100 278 1094zM405 935 415 938 320 1110 310 1105z" fill="#4a4f41" />
        <path d="M305 895 330 903 230 1060 210 1055z" fill="#978c85" opacity=".8" /><path d="M430 950 485 965 440 1050 400 1040z" fill="#6a645d" opacity=".85" />
        <path d="M200 1065 448 1195 340 1290 240 1372 185 1320 50 1230 105 1150z" fill="url(#salt)" />
        <path d="M190 1070 330 1140 260 1220 140 1190 110 1150zM50 1225 105 1160 160 1200 110 1280zM250 1230 380 1200 330 1275z" fill="#fbf9f7" opacity=".85" />
        <path d="M140 1205 215 1230 180 1270 205 1335 110 1280z" fill="#333b35" /><path d="M150 1215 190 1240 165 1255 195 1260" stroke="#b9b3ae" strokeWidth="5" fill="none" />
        <path d="M105 1150 340 1280M45 1265 290 1420 245 1372 460 1190M150 1530 300 1425" fill="none" stroke="#2c3a2a" strokeWidth="8" />
        <path d="M245 985 505 1085M210 1062 450 1192M505 1085 560 995" stroke="#a9c5ca" strokeWidth="6" fill="none" />
        <path d="M45 920 90 930 75 960 100 995 50 980zM110 930 225 965 200 1030 130 1045z" fill="#a6938c" /><path d="M165 950 225 970 205 1000 190 980z" fill="#f0eae6" />

        <g fill="none" stroke="#7d8179">
          <path d="M397 90V680" strokeWidth="8" stroke="#47523f" /><path d="M407 90V690M389 280V640" strokeWidth="3" />
          <path d="M43 92H388M43 272H600M43 447H388M405 480H665" strokeWidth="5" /><path d="M47 176h72M150 186h238M47 360h68M192 364h186M150 535h220" strokeWidth="2.500" />
          <path d="M43 607 400 683 665 745M45 795 300 888 560 992" strokeWidth="5" /><path d="M668 320 664 745" strokeWidth="6" />
          <path d="M45 1448 150 1520M60 1450 130 1330" strokeWidth="5" /><path d="M134 45V610M147 280V600" strokeWidth="3" />
        </g>
        <path d="M125 45V440L120 530 108 610" fill="none" stroke="#a9aeac" strokeWidth="8" /><path d="M125 90V260M143 140V185M105 480 92 520M108 540 106 575M150 600 120 620M100 620 62 700" stroke="#eef3f4" strokeWidth="11" fill="none" />
        <path d="M47 66h72v14H47zM378 280h8v165h-8zM205 450h10v28h-10zM325 450h9v22h-9zM372 640h8v30h-8z" fill="#9c8c85" />
        <path d="M55 275h18v13H55zM57 425h14v16H57zM507 355h14v25h-14zM440 287h30v8h-30zM175 45h12v38h-12zM250 65h18v20h-18z" fill="#d3dde3" />
        <path d="M365 40 400 85 415 70 385 40z" fill="#17201a" />
      </g>
    </svg>
  );
}

const NorthArrow = () => (
  <svg viewBox="0 0 20 40" className="absolute right-[52px] top-[46px] h-10 w-5" aria-label="North">
    <path d="M9.500 0v40" stroke="#777" strokeWidth="1.500" />
    <path d="M9.500 0 14 14l-4.500-2z" fill="#111" />
    <text x="1" y="32" fontFamily="Liberation Serif" fontWeight="700" fontSize="24" fill="#222">N</text>
  </svg>
);

/* ---------- page ---------- */

const STATUS_BOX = "h-[29px] border-2 border-[#9a9a9a] bg-[#efefed] shadow-[inset_1px_1px_0_#ffffff]";

export default function App() {
  return (
    <div className="relative flex h-screen min-h-[860px] min-w-[1480px] flex-col overflow-hidden bg-[#f0f0ee]">
      <nav className="flex h-[11px] shrink-0 items-end gap-[18px] overflow-hidden bg-white pl-[3px] font-['Open_Sans',sans-serif] text-[15px] leading-5 text-[#777777]">
        {["File", "Edit", "Display", "Placemarks", "Views", "Help"].map((m) => (
          <a key={m} href={`#${m.toLowerCase()}`} className="block">{m}</a>
        ))}
      </nav>

      <div className="flex h-[46px] shrink-0 items-center">
        <div className="-ml-[3px] mr-[3px] flex">
          <Tool label="Open"><OpenFolder /></Tool>
          <Tool label="Data Manager"><Clipboard /></Tool>
          <Tool label="Subset"><Crop /></Tool>
        </div>
        <div className="mr-0.5 flex">
          <Tool label="Cursor value"><Pin /></Tool>
          <button type="button" aria-label="Select" aria-pressed="true" className="mx-px flex h-[26px] w-[26px] items-center justify-center border border-[#1f7fd4] bg-[#c2dcf2]"><Pointer /></button>
          <Tool label="Pan"><Hand /></Tool>
          <Tool label="Fly"><Move /></Tool>
          <Tool label="Rotate view"><Rotate /></Tool>
          <Tool label="Zoom"><Lens mark="M8.500 6V4h2M13.500 4h2v2M15.500 8v2h-2M10.500 10h-2V8" /></Tool>
        </div>
        <div className="flex">
          <Tool label="Zoom in"><Lens mark="M8 7h8M12 3v8" /></Tool>
          <Tool label="Zoom out"><Lens mark="M8 7h8" /></Tool>
          <Tool label="Zoom to extent"><FitLens /></Tool>
        </div>
        <Combo label="Zoom level" value="100% (1:1)" className="w-[121px]" />
        <div className="ml-1 flex">
          <Tool label="North up"><ArrowBlocks /></Tool>
          <Tool label="Rotate to"><ArrowCompass /></Tool>
        </div>
        <Combo label="Rotation" value="0°" className="w-[99px]" />
        <div className="ml-0.5 flex">
          <Tool wide label="Arbitrary profile"><ProfileArrows /></Tool>
          <Tool wide label="Spectral profile"><Spectrum /></Tool>
          <Tool wide label="Scatter plot"><Scatter /></Tool>
          <Tool wide label="Region of interest"><Roi /></Tool>
          <Tool wide label="Feature counting"><Counter /></Tool>
        </div>
        <button type="button" className={`ml-2.5 flex items-center text-[#8a8a88] ${MONO}`}>
          <VectorIcon />
          <span className="ml-1">Vectors</span>
          <svg viewBox="0 0 10 6" className="ml-0.5 h-1.5 w-2.5" aria-hidden="true"><path d="M0 0h10L5 6z" fill="#777" /></svg>
        </button>
        <button type="button" className={`ml-4 flex items-center text-black ${MONO}`}>
          <TextIcon />
          <span className="ml-1">Annotations</span>
          <svg viewBox="0 0 10 6" className="ml-0.5 h-1.5 w-2.5" aria-hidden="true"><path d="M0 0h10L5 6z" fill="#000" /></svg>
        </button>
        <Combo label="Go To" value="Go To" className="ml-3.5 w-[225px]" />
        <div className="ml-2"><Tool label="Extensions"><Extensions5 /></Tool></div>
      </div>

      <div className="flex h-[30px] shrink-0 items-center">
        <div className="-ml-[3px] mr-px"><SliderGroup name="Brightness" value={50} max={100} left={<Ball kind="dark" />} right={<Ball kind="light" />} /></div>
        <Divider />
        <div className="ml-2 mr-px"><SliderGroup name="Contrast" value={20} max={100} left={<Ball kind="contrastLow" />} right={<Ball kind="contrastHigh" />} /></div>
        <Divider />
        <div className="ml-2 flex">
          <button type="button" aria-label="Stretch on view extent" className="flex h-[27px] w-[27px] items-center justify-center border-l-2 border-t border-[#8a8a8a] bg-white"><Extent /></button>
          <button type="button" aria-label="Stretch on full extent" className="flex h-[27px] w-[27px] items-center justify-center border-b-2 border-r-2 border-[#8a8a8a] bg-white"><ExtentIn /></button>
        </div>
        <div className="ml-1.5 mr-1"><Tool label="Update stretch"><DisabledRefresh /></Tool></div>
        <Combo filled label="Stretch type" value="Linear 2%" className="w-[151px]" />
        <div className="ml-1"><Tool wide label="Reset stretch"><Refresh /></Tool></div>
        <Tool wide label="Custom stretch"><HistogramIcon /></Tool>
        <span className="w-1" />
        <Divider />
        <div className="ml-2 mr-px"><SliderGroup name="Sharpen" value={10} max={100} left={<Ball kind="blur" />} right={<Ball kind="sharp" />} /></div>
        <Divider />
        <div className="ml-2 mr-px"><SliderGroup name="Transparency" value={0} max={100} left={<Overlap front="#ffffff" />} right={<Overlap front="#b9c3cb" />} /></div>
        <Divider />
        <div className="ml-1.5 flex">
          <Tool wide label="Mensuration"><SetSquare /></Tool>
          <Tool wide label="Chip"><ImageChip /></Tool>
        </div>
        <div className="ml-1 flex">
          {([["Blend", <BlendIcon key="b" />], ["Flicker", <FlickerIcon key="f" />], ["Swipe", <SwipeIcon key="s" />]] as [string, React.ReactNode][]).map(([label, icon]) => (
            <button key={label} type="button" aria-label={label} className="flex h-[27px] w-[27px] items-center justify-center border-b-2 border-r-2 border-[#8a8a8a] bg-white">{icon}</button>
          ))}
        </div>
      </div>

      <main className="flex min-h-0 flex-1 pt-1">
        <aside className="flex w-[290px] shrink-0 flex-col pt-[3px]">
          <PanelHeader title="Layer Manager" className="pl-[29px]" />
          <div className="flex h-[30px] shrink-0 items-center gap-3.5 pl-[3px]"><CollapseButton /><CollapseButton down /></div>
          <ul className={`flex-1 border-b-2 border-r border-t border-[#828790] bg-white pl-[9px] pt-[2px] text-black ${MONO}`}>
            <li>
              <div className="flex h-5 items-center">
                <Expander open />
                <Dots className="w-2" />
                <EyeMonitor />
                <span className="pl-[5px]">View</span>
              </div>
              <ul className="pl-[29px]">
                <li className="relative flex h-5 items-center">
                  <span className="absolute left-0 top-0 h-5 w-px border-l border-dotted border-[#808080]" />
                  <Dots className="w-[15px]" />
                  <input id="ov" type="checkbox" className="size-4 shrink-0 appearance-none border-2 border-[#333333] bg-white" />
                  <span className="ml-[3px]"><EyeMonitor /></span>
                  <label htmlFor="ov" className="pl-[5px]">Overview</label>
                </li>
                <li className="relative flex h-5 items-center">
                  <span className="-ml-[5px]"><Expander /></span>
                  <Dots className="w-[9px]" />
                  <span className="relative">
                    <input id="ls" type="checkbox" defaultChecked className="block size-4 shrink-0 appearance-none border-2 border-[#333333] bg-white" />
                    <svg viewBox="0 0 16 16" className="pointer-events-none absolute inset-0 size-4" fill="none" aria-hidden="true"><path d="m3.500 8 3 3 6-6.500" stroke="#333" strokeWidth="1.700" /></svg>
                  </span>
                  <span className="ml-[3px]"><RasterIcon /></span>
                  <label htmlFor="ls" className="ml-[3px] bg-[#0078d7] px-0.5 text-white">Landsat8_OLI_multi.dat</label>
                </li>
              </ul>
            </li>
          </ul>
        </aside>

        <section className="relative ml-2 flex min-w-0 flex-1 items-center justify-center border border-[#a6a6a6] bg-white">
          <div className="h-[497px] w-[495px] border border-[#3cbfca]"><Scene /></div>
          <NorthArrow />
        </section>

        <aside className="ml-2 mr-0.5 flex w-[291px] shrink-0 flex-col pt-[3px]">
          <PanelHeader title="Toolbox" className="pl-8" />
          <div className="mt-1.5 flex shrink-0 items-center pl-px">
            <input
              type="search"
              aria-label="Search the toolbox"
              placeholder="Search the toolbox"
              className={`h-[27px] w-[255px] border-b border-r border-t border-[#7f7f7f] bg-white px-[3px] placeholder:text-[#8a8a8a] ${MONO}`}
            />
            <Tool label="Refresh toolbox" wide><Refresh /></Tool>
          </div>
          <div className="mt-[3px] h-[26px] shrink-0 border-2 border-r-0 border-[#9a9a9a]" />
          <div className="flex h-[33px] shrink-0 items-center pl-[5px]">
            <CollapseButton />
            <span className="ml-3.5"><CollapseButton down /></span>
            <span className="ml-6 flex gap-0.5"><Tool label="Add to favorites"><Star /></Tool><Tool label="Remove from favorites"><Star minus /></Tool></span>
          </div>
          <div className="min-h-0 flex-1 overflow-hidden border-2 border-r-0 border-[#9a9fa8] bg-white"><ToolboxTree /></div>
        </aside>
      </main>

      <footer className="flex shrink-0 items-center gap-[5px] pb-[3px] pt-[3px]">
        <div className={`flex-1 border-l-0 ${STATUS_BOX}`} />
        <div className={`flex-1 ${STATUS_BOX}`} />
        <div className={`flex flex-1 items-center justify-end ${STATUS_BOX}`}>
          <svg viewBox="0 0 8 18" className="h-[18px] w-2" fill="none" aria-hidden="true"><path d="M0 1h3l1 1 1-1h3M0 17h3l1-1 1 1h3M4 2v14" stroke="#111" strokeWidth="1.200" /></svg>
        </div>
        <div className="flex h-[29px] w-[150px] items-center justify-end border-2 border-[#8a8a8a] border-b-[#d5d5d3] border-r-[#d5d5d3]">
          <span className="h-5 w-px bg-[#a8a8a6]" />
          <button type="button" aria-label="Cancel" className="ml-1">
            <svg viewBox="0 0 18 18" className="size-[17px]" aria-hidden="true"><path d="M2 2 16 16M16 2 2 16" stroke="#111" strokeWidth="2.600" strokeLinecap="round" /></svg>
          </button>
        </div>
        <div className="-ml-1 flex h-[29px] w-5 items-center border-2 border-r-0 border-[#8a8a8a]">
          <svg viewBox="0 0 16 18" className="h-[18px] w-4" aria-hidden="true">
            <path d="M.5 1h16v16H.5z" fill="#fafafa" stroke="#999" /><path d="M3 7h3v4H3z" fill="#999" /><path d="M3 12h5v4H3z" fill="#111" /><path d="M11 3h4v3h-4zM11 8h4v3h-4zM11 13h4v3h-4z" fill="#a9a9a9" />
          </svg>
        </div>
      </footer>
      <div className="flex h-0.5 shrink-0 bg-[#33221f]"><span className="ml-[54px] w-[430px] bg-[#dcdcdc]" /></div>

      <div className="absolute -right-[39px] top-[656px] flex size-14 items-center rounded-full border-2 border-[#b4b4b4] bg-[#48ab5c] pl-1.5 font-['Open_Sans',sans-serif] text-xs font-bold text-white shadow-[inset_0_0_0_2px_#ffffff,-2px_4px_8px_#00000040]">
        6
        <svg viewBox="0 0 12 8" className="absolute left-2.5 top-[7px] h-2 w-3" aria-hidden="true"><path d="M0 8C3 6 3 2 8 0h4v8z" fill="#7f8a82" /></svg>
      </div>
    </div>
  );
}
